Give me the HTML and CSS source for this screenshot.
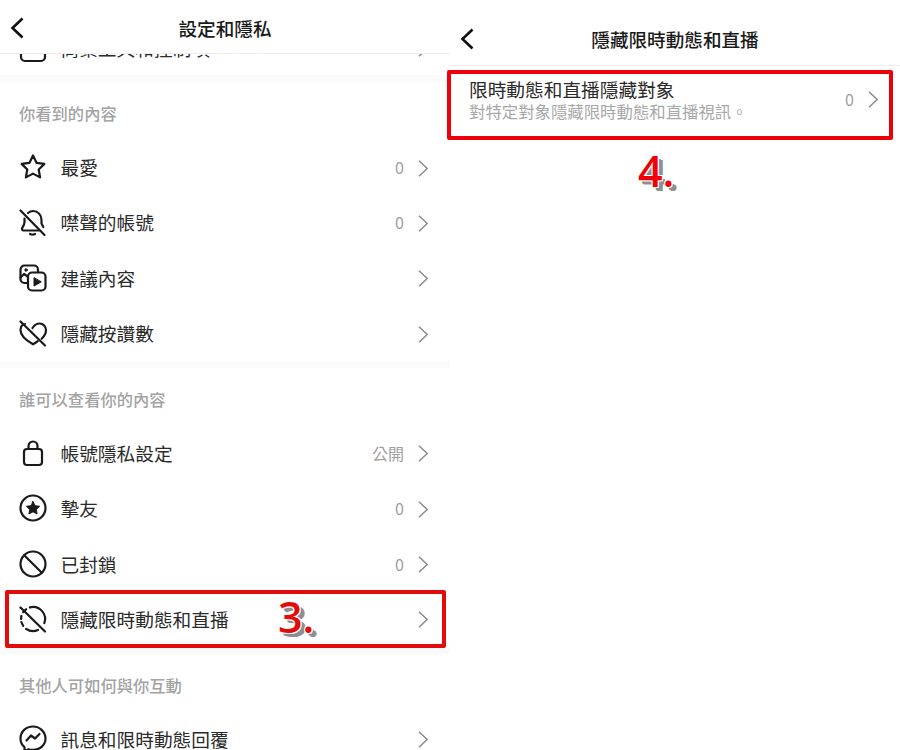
FILE: index.html
```html
<!DOCTYPE html>
<html lang="zh-Hant">
<head>
  <meta charset="UTF-8" />
  <meta name="viewport" content="width=device-width, initial-scale=1.0" />
  <title>隱藏限時動態和直播</title>
  <link rel="stylesheet" href="styles.css">
</head>
<body>
  <svg class="sprite" aria-hidden="true">
    <symbol id="chev" viewBox="0 0 10 17"><path d="M1 .8 9.200 8.500 1 16.200" fill="none" stroke="currentColor" stroke-width="1.500"/></symbol>
    <symbol id="back" viewBox="0 0 14 22"><path d="M12.500 1.500 2.500 11l10 9.500" fill="none" stroke="currentColor" stroke-width="2.600"/></symbol>
  </svg>

  <div class="panel">
    <div class="header header-short">
      <svg class="back"><use href="#back"/></svg>
      <h1>設定和隱私</h1>
    </div>
    <div class="list">
      <div class="row row-cut">
        <svg class="icon" viewBox="0 0 28 28"><rect x="2" y="5" width="24" height="22" rx="4"/></svg>
        <span class="name">商業工具和控制項</span>
        <svg class="chev"><use href="#chev"/></svg>
      </div>

      <div class="band"></div>
      <div class="label">你看到的內容</div>
      <div class="row">
        <svg class="icon" viewBox="0 0 28 28"><path d="M14 2.500l3.500 7.300 7.900 1.100-5.700 5.600 1.400 7.900-7.100-3.800-7.100 3.800 1.400-7.900-5.700-5.600 7.900-1.100z"/></svg>
        <span class="name">最愛</span>
        <span class="value">0</span>
        <svg class="chev"><use href="#chev"/></svg>
      </div>
      <div class="row">
        <svg class="icon" viewBox="0 0 28 28"><path d="M9 5c1.500-1.300 3.300-2 5-2 5 0 8.500 4 8.500 9v3.500l1.800 3.500"/><path d="M5.500 10.500V14c0 2.500-1.500 4.500-2.300 6-.6 1.200 0 2.500 1.300 2.500h15.500"/><path d="M11 26c1.500.8 3.500.8 5 0"/><path d="M1.500 2.500 25.500 27"/></svg>
        <span class="name">噤聲的帳號</span>
        <span class="value">0</span>
        <svg class="chev"><use href="#chev"/></svg>
      </div>
      <div class="row">
        <svg class="icon" viewBox="0 0 28 28"><path d="M8 19H5.500a4 4 0 0 1-4-4V5.500a4 4 0 0 1 4-4h9.500a4 4 0 0 1 4 4V8"/><path d="M1.500 13.500l3.500-3.500 3 2"/><rect x="9" y="8.500" width="17.500" height="18" rx="4"/><path class="solid" d="M15 14v8l7-4z"/><circle class="solid" cx="7" cy="6" r="1.200"/></svg>
        <span class="name">建議內容</span>
        <svg class="chev"><use href="#chev"/></svg>
      </div>
      <div class="row">
        <svg class="icon" viewBox="0 0 28 28"><path d="M13.500 9c1.800-2.800 4.200-4.500 7-4.500 3.800 0 6.500 3 6.500 6.800 0 3-1.500 5.700-4.300 8.500"/><path d="M6 5C3 5.500 1.500 8 1.500 11.300c0 5 5.500 10 12.500 14 1.800-1 3.300-2 4.800-3.200"/><path d="M1.500 2.500 26 26.500"/></svg>
        <span class="name">隱藏按讚數</span>
        <svg class="chev"><use href="#chev"/></svg>
      </div>

      <div class="band"></div>
      <div class="label">誰可以查看你的內容</div>
      <div class="row">
        <svg class="icon" viewBox="0 0 28 28"><path d="M9.500 10V7a4.500 4.500 0 0 1 9 0v3"/><rect x="5" y="10" width="18" height="16" rx="3"/></svg>
        <span class="name">帳號隱私設定</span>
        <span class="value">公開</span>
        <svg class="chev"><use href="#chev"/></svg>
      </div>
      <div class="row">
        <svg class="icon" viewBox="0 0 28 28"><circle cx="14" cy="14" r="12.500"/><path class="solid" d="M14 7.500l2 4.200 4.600.6-3.300 3.200.8 4.500-4.100-2.200-4.100 2.200.8-4.500-3.300-3.200 4.600-.6z"/></svg>
        <span class="name">摯友</span>
        <span class="value">0</span>
        <svg class="chev"><use href="#chev"/></svg>
      </div>
      <div class="row">
        <svg class="icon" viewBox="0 0 28 28"><circle cx="14" cy="14" r="12.500"/><path d="M5.200 5.200 22.800 22.800"/></svg>
        <span class="name">已封鎖</span>
        <span class="value">0</span>
        <svg class="chev"><use href="#chev"/></svg>
      </div>
      <div class="row">
        <svg class="icon" viewBox="0 0 28 28"><path d="M10.900 2.400A12 12 0 0 1 25.300 18.100"/><path d="M19 24.900A12 12 0 0 1 7.100 23.800"/><path d="M4.200 20.900 2.400 17.100"/><path d="M2 14l.4-3.100"/><path d="M4.200 7.100 7.100 4.200"/><path d="M1.500 2.500 26 26.500"/></svg>
        <span class="name">隱藏限時動態和直播</span>
        <svg class="chev"><use href="#chev"/></svg>
      </div>

      <div class="band"></div>
      <div class="label">其他人可如何與你互動</div>
      <div class="row">
        <svg class="icon" viewBox="0 0 28 28"><path d="M14 1.500C7 1.500 1.500 6.600 1.500 13.500c0 3.500 1.500 6.600 4 8.700v4.300l4-2.200c1.400.4 3 .6 4.500.6 7 0 12.500-5 12.500-11.400S21 1.500 14 1.500z"/><path d="M7.500 15.500l4.500-5 4 3 4.500-4.500"/></svg>
        <span class="name">訊息和限時動態回覆</span>
        <svg class="chev"><use href="#chev"/></svg>
      </div>
    </div>
    <div class="mark mark-left"></div>
    <div class="step step-three">3.</div>
  </div>

  <div class="panel">
    <div class="header header-tall">
      <svg class="back"><use href="#back"/></svg>
      <h1>隱藏限時動態和直播</h1>
    </div>
    <div class="row row-detail">
      <div class="detail-text">
        <div class="name">限時動態和直播隱藏對象</div>
        <div class="sub">對特定對象隱藏限時動態和直播視訊。</div>
      </div>
      <span class="value">0</span>
      <svg class="chev"><use href="#chev"/></svg>
    </div>
    <div class="mark mark-right"></div>
    <div class="step step-four">4.</div>
  </div>
</body>
</html>
```

FILE: styles.css
```css
* {
  box-sizing: border-box;
  margin: 0;
  padding: 0;
}
body {
  font-family: "Noto Sans CJK TC", "Noto Sans", sans-serif;
  background-color: #ffffff;
  color: #222222;
  display: flex;
  height: 750px;
  overflow: hidden;
}
.sprite {
  display: none;
}
.panel {
  width: 450px;
  height: 750px;
  position: relative;
}
.header {
  display: grid;
  grid-template-columns: 1fr auto 1fr;
  align-items: center;
  background-color: #ffffff;
  border-bottom: 1px solid #eeeeee;
  padding: 0 10px;
  position: relative;
  z-index: 1;
}
.header-short {
  height: 54px;
  padding-top: 2px;
}
.header-tall {
  height: 66px;
  padding-top: 12px;
}
.header h1 {
  font-size: 18.600px;
  font-weight: 500;
  line-height: 24px;
  color: #1a1a1a;
}
.back {
  width: 14px;
  height: 22px;
  color: #111111;
}
.list {
  margin-top: -34px;
}
.row {
  display: flex;
  align-items: center;
  height: 55.330px;
  padding: 0 22px 0 19px;
}
.row-cut {
  height: 55px;
}
.icon {
  width: 28px;
  height: 28px;
  flex-shrink: 0;
  margin-right: 13.500px;
  overflow: visible;
  fill: none;
  stroke: #1a1a1a;
  stroke-width: 2.200;
  stroke-linecap: round;
  stroke-linejoin: round;
}
.icon .solid {
  fill: #1a1a1a;
  stroke-width: 1;
}
.name {
  font-size: 18.700px;
  line-height: 22px;
  color: #2a2a2a;
  flex-grow: 1;
}
.value {
  font-size: 16px;
  color: #a0a0a0;
  margin-right: 14px;
}
.chev {
  width: 10px;
  height: 17px;
  margin-top: 2px;
  color: #8a8a8a;
  flex-shrink: 0;
}
.band {
  height: 7px;
  background-color: #fafafa;
}
.label {
  height: 57.500px;
  padding-top: 20px;
  font-size: 16.300px;
  font-weight: 500;
  line-height: 22px;
  color: #a3a3a3;
  padding-left: 19px;
}
.row-detail {
  height: 66px;
}
.row-detail .chev {
  margin-top: 0;
}
.detail-text {
  flex-grow: 1;
  margin-top: 1px;
}
.sub {
  font-size: 16.400px;
  line-height: 22px;
  color: #a8a8a8;
}
.mark {
  position: absolute;
  border: 4px solid #e30b0b;
  border-radius: 2px;
  z-index: 2;
}
.mark-left {
  left: 5px;
  top: 590px;
  width: 441px;
  height: 58px;
}
.mark-right {
  left: -3px;
  top: 70px;
  width: 446px;
  height: 70px;
  border-color: #ee0008;
}
.step {
  position: absolute;
  z-index: 3;
  font-family: "Open Sans", sans-serif;
  font-size: 43px;
  font-weight: 600;
  line-height: 50px;
  color: #e30b0b;
  text-shadow: 1px 1px 0 #ffffff, -1px -1px 0 #ffffff, 1px -1px 0 #ffffff, -1px 1px 0 #ffffff, 3px 3px 0 #8f8f8f, 4px 4px 0 #8f8f8f, 5px 4px 0 #8f8f8f;
}
.step-three {
  left: 278px;
  top: 592px;
}
.step-four {
  left: 188px;
  top: 146px;
  color: #f00008;
}
```
